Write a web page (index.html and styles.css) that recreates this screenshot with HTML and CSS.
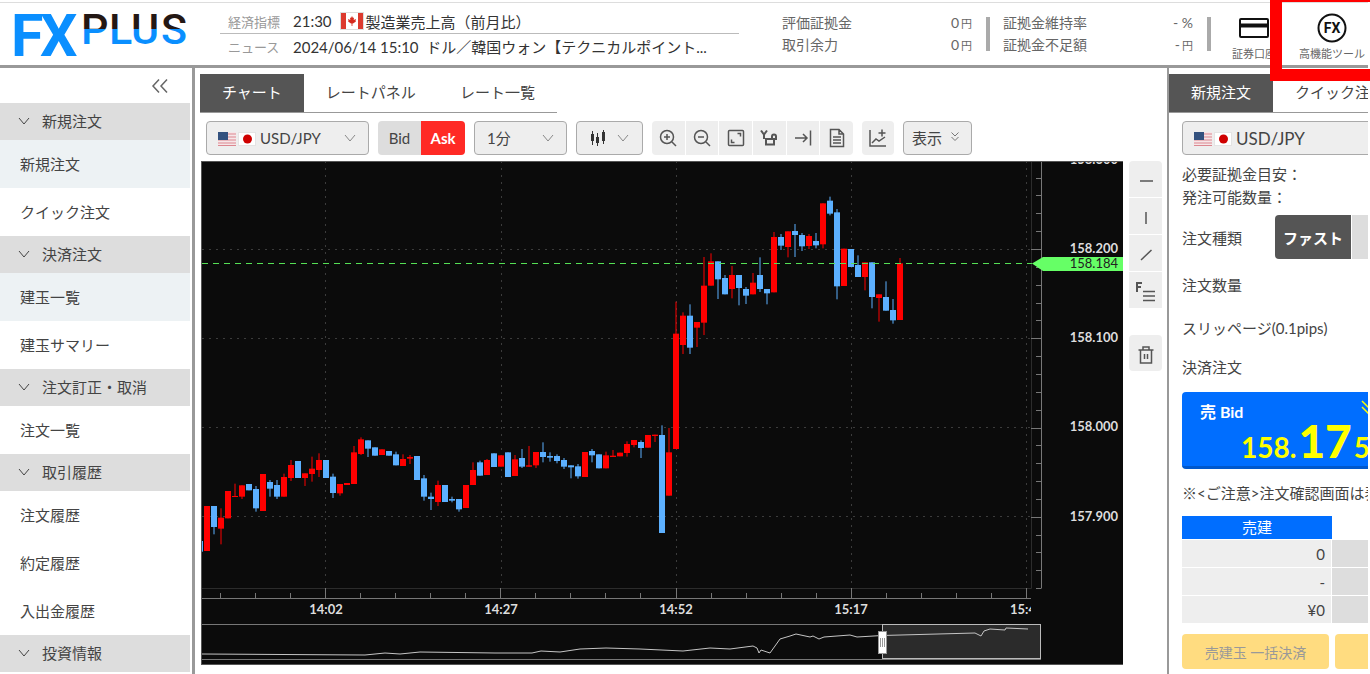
FILE: index.html
```html
<!DOCTYPE html>
<html lang="ja">
<head>
    <meta charset="UTF-8">
    <meta name="viewport" content="width=device-width, initial-scale=1.0">
    <title>FXPLUS</title>
    <link rel="stylesheet" href="styles.css">
</head>
<body>

    <!-- 共通アイコン -->
    <svg class="defs" aria-hidden="true">
        <symbol id="flags" viewBox="0 0 39 16">
            <rect y="1" width="18" height="14" fill="#f6e6e8"/>
            <path d="M0 3h18M0 6h18M0 9h18M0 12h18M0 14.5h18" stroke="#dc8790" stroke-width="1"/>
            <rect y="1" width="10" height="8" fill="#34527f"/>
            <rect x="20.500" y="1.500" width="17" height="13" fill="#fff" stroke="#e4e4e4"/>
            <circle cx="29.500" cy="8" r="4.500" fill="#cf0000"/>
        </symbol>
        <symbol id="chev" viewBox="0 0 12 12">
            <path d="M1 3l5 6 5-6" fill="none" stroke="currentColor"/>
        </symbol>
    </svg>

    <header class="header">
        <a href="#" class="logo" aria-label="FXPLUS">
            <svg width="180" height="50" viewBox="0 0 180 50">
                <defs>
                    <linearGradient id="twoTone" gradientUnits="userSpaceOnUse" x1="0" y1="0" x2="0" y2="50">
                        <stop offset="0.400" stop-color="#231815"/>
                        <stop offset="0.400" stop-color="#0a8fff"/>
                    </linearGradient>
                </defs>
                <text class="logo-fx" x="-3 26" y="47">FX</text>
                <text class="logo-plus" x="67 95 117 147" y="35" fill="url(#twoTone)">PLUS</text>
            </svg>
        </a>
        <dl class="news">
            <div><dt>経済指標</dt><dd>21:30
                <svg class="flag-ca" width="24" height="18" viewBox="0 0 24 18"><rect x=".5" y=".5" width="23" height="17" fill="#fff" stroke="#ddd"/><path d="M1 1h5v16H1zM18 1h5v16h-5z" fill="#dc3a2e"/><path d="M12 4l1 2 1-.5-.3 2.500L16 7l-.5 2 .5.500-3 2h-.6V14h-.8v-2.500H11l-3-2 .5-.5L8 7l2.300 1L10 5.500l1 .5z" fill="#d52b1e"/></svg>製造業売上高（前月比）</dd></div>
            <div><dt>ニュース</dt><dd>2024/06/14 15:10&nbsp; ドル／韓国ウォン【テクニカルポイント...</dd></div>
        </dl>
        <dl class="stats">
            <div><dt>評価証拠金</dt><dd>0<small>円</small></dd></div>
            <div><dt>取引余力</dt><dd>0<small>円</small></dd></div>
        </dl>
        <dl class="stats">
            <div><dt>証拠金維持率</dt><dd>- %</dd></div>
            <div><dt>証拠金不足額</dt><dd>-<small>円</small></dd></div>
        </dl>
        <nav class="tools">
            <a href="#" class="tool tool-account">
                <svg width="30" height="30" viewBox="0 0 30 30"><rect x="1" y="6" width="28" height="18" rx="1" fill="#fff" stroke="#111" stroke-width="2"/><path d="M1 12.500h28" stroke="#111" stroke-width="4"/></svg>
                <span>証券口座</span>
            </a>
            <a href="#" class="tool tool-fx">
                <svg width="30" height="30" viewBox="0 0 30 30"><circle cx="15" cy="15" r="13.500" fill="none" stroke="#111" stroke-width="2"/><text x="15" y="20" text-anchor="middle" class="fx-mark">FX</text></svg>
                <span>高機能ツール</span>
            </a>
        </nav>
        <div class="highlight"></div>
    </header>

    <div class="main">
        <nav class="sidebar">
            <button class="fold" aria-label="メニューを閉じる">
                <svg width="18" height="16" viewBox="0 0 18 16"><path d="M8 1.500L2 8l6 6.500M16 1.500L10 8l6 6.500" fill="none" stroke="#666" stroke-width="1.500"/></svg>
            </button>
            <h2><svg><use href="#chev"/></svg>新規注文</h2>
            <a href="#" class="on">新規注文</a>
            <a href="#">クイック注文</a>
            <h2><svg><use href="#chev"/></svg>決済注文</h2>
            <a href="#" class="on">建玉一覧</a>
            <a href="#">建玉サマリー</a>
            <h2><svg><use href="#chev"/></svg>注文訂正・取消</h2>
            <a href="#">注文一覧</a>
            <h2><svg><use href="#chev"/></svg>取引履歴</h2>
            <a href="#">注文履歴</a>
            <a href="#">約定履歴</a>
            <a href="#">入出金履歴</a>
            <h2><svg><use href="#chev"/></svg>投資情報</h2>
        </nav>

        <section class="center">
            <div class="tabs">
                <button class="active">チャート</button>
                <button>レートパネル</button>
                <button>レート一覧</button>
            </div>

            <div class="toolbar">
                <div class="pair">
                    <svg class="flags"><use href="#flags"/></svg>
                    <select aria-label="通貨ペア"><option>USD/JPY</option></select>
                    <svg class="arrow"><use href="#chev"/></svg>
                </div>
                <div class="bidask">
                    <button>Bid</button><button class="ask">Ask</button>
                </div>
                <div class="span">
                    <select aria-label="足種"><option>1分</option></select>
                    <svg class="arrow"><use href="#chev"/></svg>
                </div>
                <button class="outline kind" aria-label="チャート種類">
                    <svg width="16" height="16" viewBox="0 0 16 16"><path d="M2.500 1v14M7.500 3v13M13.500 0v14" stroke="#333"/><path d="M2.500 4v7M7.500 7v6M13.500 2v9" stroke="#333" stroke-width="3"/></svg>
                    <svg class="chev"><use href="#chev"/></svg>
                </button>
                <div class="icons zoom">
                    <button aria-label="拡大"><svg viewBox="0 0 20 20"><circle cx="9" cy="9" r="6.500"/><path d="M14 14l4 4M6 9h6M9 6v6"/></svg></button>
                    <button aria-label="縮小"><svg viewBox="0 0 20 20"><circle cx="9" cy="9" r="6.500"/><path d="M14 14l4 4M6 9h6"/></svg></button>
                    <button aria-label="全体表示"><svg viewBox="0 0 20 20"><rect x="2.500" y="2.500" width="15" height="15" rx="1"/><path d="M11.500 5.500h3v3M5.500 11.500v3h3"/></svg></button>
                    <button aria-label="Y軸固定"><svg viewBox="0 0 20 20"><path d="M2 2.500l3 4 3-4M5 6.500V11" stroke-width="2"/><rect x="7" y="11" width="8" height="5.500" stroke-width="2"/><path d="M13 11V8.500a2 2 0 0 1 4 0V12" stroke-width="2"/></svg></button>
                    <button aria-label="最新へ"><svg viewBox="0 0 20 20"><path d="M2 10h12M10 6l4 4-4 4M17.500 2.500v15"/></svg></button>
                    <button aria-label="メモ"><svg viewBox="0 0 20 20"><path d="M3.500 1.500h8.500l4.500 4.500v12.500h-13zM12 1.500V6h4.500M6 9h8M6 12h8M6 15h8"/></svg></button>
                </div>
                <div class="icons">
                    <button aria-label="テクニカル追加"><svg viewBox="0 0 20 20"><path d="M2 2v16h16M4 15l4-4 3 2 6-4M14 1.500v7M10.500 5h7"/></svg></button>
                </div>
                <button class="outline">表示
                    <svg class="chev" viewBox="0 0 12 12"><path d="M2.500 1.500L6 5l3.500-3.500M2.500 6L6 9.500 9.500 6" fill="none" stroke="#777"/></svg>
                </button>
            </div>

            <div class="chart-row">
                <div class="chart">
                    <svg id="chart" viewBox="-1 0 922 504" preserveAspectRatio="xMinYMin meet"></svg>
                </div>
                <div class="draw">
                    <button aria-label="水平線"><svg viewBox="0 0 20 20"><path d="M4 10h13"/></svg></button>
                    <button aria-label="垂直線"><svg viewBox="0 0 20 20"><path d="M10 4v12"/></svg></button>
                    <button aria-label="トレンドライン"><svg viewBox="0 0 20 20"><path d="M5 15L15.500 5"/></svg></button>
                    <button aria-label="フィボナッチ"><svg viewBox="0 0 20 20"><path d="M1 10V1h5M1 5h4" stroke-width="2"/><path d="M7 9.500h12M7 14h12M7 18.500h12"/></svg></button>
                    <button class="trash" aria-label="削除"><svg viewBox="0 0 20 20"><path d="M2.500 5h15M7 5V2h6v3M4.500 5v13h11V5M8.500 9v5M11.500 9v5"/></svg></button>
                </div>
            </div>
        </section>

        <aside class="order">
            <div class="tabs">
                <button class="active">新規注文</button>
                <button>クイック注文</button>
            </div>
            <form class="order-form">
                <div class="pair">
                    <svg class="flags"><use href="#flags"/></svg>
                    <select aria-label="注文通貨ペア"><option>USD/JPY</option></select>
                </div>
                <p class="margin">必要証拠金目安：<br>発注可能数量：</p>
                <div class="row type"><span>注文種類</span><button type="button" class="fast">ファスト</button><button type="button" class="next" aria-label="リアルタイム"></button></div>
                <div class="row qty">注文数量</div>
                <div class="row slip">スリッページ(0.1pips)</div>
                <div class="row settle">決済注文</div>
                <button type="button" class="bid">
                    <span class="side">売 Bid</span>
                    <span class="price">158.<b>17</b>5</span>
                    <svg class="down" width="14" height="14" viewBox="0 0 14 14"><path d="M1 1l6 6 6-6M1 7l6 6 6-6" fill="none" stroke="#ff0" stroke-width="1.500"/></svg>
                </button>
                <p class="notice">※&lt;ご注意&gt;注文確認画面は表示されません。</p>
                <table>
                    <tr><th>売建</th><td class="blank"></td></tr>
                    <tr><td>0</td><td class="mid"></td></tr>
                    <tr><td>-</td><td class="mid"></td></tr>
                    <tr><td>¥0</td><td class="mid"></td></tr>
                </table>
                <div class="close-all">
                    <button type="button">売建玉 一括決済</button>
                    <button type="button" aria-label="全決済"></button>
                </div>
            </form>
        </aside>
    </div>

    <script src="chart.js"></script>
</body>
</html>
```

FILE: styles.css
```css
* {
    box-sizing: border-box;
}
body {
    margin: 0;
    padding-right: 2px;
    height: 100vh;
    display: flex;
    flex-direction: column;
    overflow: hidden;
    background: #fff;
    color: #444;
    font-family: Lato, "Noto Sans CJK JP", sans-serif;
    font-size: 15px;
}
button, select {
    font: inherit;
    color: inherit;
    border: none;
    margin: 0;
    padding: 0;
    background: #eee;
    cursor: pointer;
}
a {
    color: inherit;
    text-decoration: none;
}
dl, dd, p, h2 {
    margin: 0;
}
.defs {
    position: absolute;
    width: 0;
    height: 0;
}

/* ヘッダー */
.header {
    position: relative;
    display: flex;
    flex: none;
    height: 68px;
    padding-top: 9px;
    border-bottom: 3px solid #999;
    background: linear-gradient(#ddd, #ddd) 0 2px / 100% 1px no-repeat;
}
.logo {
    flex: none;
    width: 206px;
    padding-left: 14px;
}
.logo svg {
    overflow: visible;
}
.logo-fx {
    font: bold 59px Roboto, sans-serif;
    fill: #0a8fff;
}
.logo-plus {
    font: 500 43px Roboto, sans-serif;
}
.news {
    flex: 0 1 519px;
    margin-left: 14px;
    min-width: 0;
}
.news div {
    display: flex;
    align-items: center;
    height: 24px;
    padding-left: 8px;
    white-space: nowrap;
    overflow: hidden;
}
.news div:first-child {
    height: 25px;
    border-bottom: 1px solid #bbb;
}
.news dt {
    flex: none;
    width: 65px;
    font-size: 13px;
    color: #999;
}
.news dd {
    color: #333;
    display: flex;
    align-items: center;
}
.flag-ca {
    margin: 0 2px 0 8px;
}
.stats {
    flex: none;
    width: 208px;
    height: 34px;
    margin: 8px 0 0 43px;
    border-right: 4px solid #aaa;
    padding-right: 14px;
    font-size: 14px;
    color: #666;
}
.stats + .stats {
    margin-left: 13px;
}
.stats div {
    display: flex;
    justify-content: space-between;
    height: 22px;
    line-height: 22px;
    margin-top: -5px;
}
.stats div + div {
    margin-top: 0;
}
.stats dt {
    white-space: nowrap;
}
.stats small {
    font-size: 11px;
    margin-left: 2px;
}
.tools {
    display: flex;
    flex: none;
    margin-left: 21px;
}
.tool {
    display: flex;
    flex-direction: column;
    align-items: center;
    padding-top: 4px;
    font-size: 11px;
    line-height: 22px;
    white-space: nowrap;
    color: #666;
}
.tool-fx {
    margin-left: 23px;
}
.fx-mark {
    font: bold 14px Roboto, sans-serif;
    fill: #111;
}
.highlight {
    position: absolute;
    top: -10px;
    right: -20px;
    width: 118px;
    height: 91px;
    border: 12px solid #f00;
    pointer-events: none;
    z-index: 2;
}

.main {
    display: flex;
    flex: 1;
    min-height: 0;
}

/* メニュー */
.sidebar {
    flex: none;
    width: 195px;
    padding-right: 2px;
    border-right: 3px solid #999;
    overflow: hidden;
}
.sidebar .fold {
    display: flex;
    align-items: center;
    justify-content: flex-end;
    width: 100%;
    height: 35px;
    padding-right: 21px;
    background: none;
}
.sidebar h2 {
    display: flex;
    align-items: center;
    height: 37px;
    padding: 0 0 2px 18px;
    background: #ddd;
    font-size: 15px;
    font-weight: normal;
}
.sidebar h2 svg {
    width: 12px;
    height: 12px;
    margin-right: 12px;
}
.sidebar a {
    display: block;
    height: 48px;
    padding-left: 20px;
    line-height: 48px;
}
.sidebar a.on {
    background: #edf2f4;
}

/* タブ */
.tabs {
    display: flex;
    width: max-content;
    margin-top: 6px;
    border-bottom: 1px solid #999;
}
.tabs button {
    height: 38px;
    padding: 0 22px 3px;
    background: none;
    white-space: nowrap;
}
.tabs .active {
    background: #555;
    color: #fff;
}

/* チャート */
.center {
    flex: 1;
    min-width: 0;
    padding: 0 5px;
}
.toolbar {
    display: flex;
    gap: 9px;
    height: 34px;
    margin: 8px 0 6px 6px;
}
.pair, .span {
    position: relative;
    flex: none;
}
.pair {
    width: 163px;
}
.span {
    width: 93px;
}
.pair select, .span select, .outline {
    appearance: none;
    width: 100%;
    height: 34px;
    padding-left: 12px;
    border: 1px solid #aaa;
    border-radius: 4px;
    background: #eee;
}
.pair select {
    padding-left: 53px;
}
.flags {
    position: absolute;
    left: 12px;
    top: 10px;
    width: 39px;
    height: 16px;
}
.arrow {
    position: absolute;
    right: 13px;
    top: 11px;
    width: 12px;
    height: 12px;
    color: #888;
    pointer-events: none;
}
.bidask {
    display: flex;
}
.bidask button {
    width: 43px;
    background: #ddd;
    border-radius: 4px 0 0 4px;
}
.bidask .ask {
    width: 44px;
    background: #ff2a25;
    color: #fff;
    font-weight: bold;
    border-radius: 0 4px 4px 0;
}
.outline {
    display: flex;
    align-items: center;
    justify-content: space-between;
    width: 69px;
    padding: 0 10px 2px 8px;
}
.outline.kind {
    width: 67px;
    padding: 0 13px;
}
.chev {
    width: 12px;
    height: 12px;
    color: #888;
}
.icons {
    display: flex;
    gap: 1px;
    width: 32px;
    border-radius: 4px;
    overflow: hidden;
}
.icons.zoom {
    width: 201px;
}
.icons button {
    display: flex;
    flex: 1;
    align-items: center;
    justify-content: center;
}
.icons svg, .draw svg {
    width: 20px;
    height: 20px;
    fill: none;
    stroke: #555;
    stroke-width: 1.500;
}
.chart-row {
    display: flex;
    gap: 6px;
    padding-left: 1px;
}
.chart {
    flex: 1;
    min-width: 0;
    background: #0b0b0b;
}
.chart > svg {
    display: block;
    width: 100%;
}
.chart text {
    font-size: 13px;
    font-weight: bold;
    fill: #ddd;
}
.chart .now {
    font-weight: normal;
    fill: #222;
}
.draw {
    flex: none;
    display: flex;
    flex-direction: column;
    gap: 1px;
    width: 33px;
}
.draw button {
    display: flex;
    align-items: center;
    justify-content: center;
    height: 36px;
    padding-top: 3px;
}
.draw button:first-child {
    border-radius: 4px 4px 0 0;
}
.draw .trash {
    margin-top: 26px;
    border-radius: 4px;
}

/* 注文パネル */
.order {
    flex: 0 0 201px;
    border-left: 2px solid #999;
    overflow: hidden;
}
.order-form {
    width: 380px;
    padding-left: 13px;
}
.order-form .pair {
    width: auto;
    margin-top: 8px;
}
.order-form select {
    font-size: 17px;
}
.margin {
    margin-top: 8px;
    line-height: 23px;
}
.row {
    display: flex;
    align-items: center;
}
.row.type {
    height: 44px;
    margin-top: 6px;
}
.row.type span {
    width: 93px;
}
.fast {
    width: 76px;
    height: 44px;
    border-radius: 4px 0 0 4px;
    background: #555;
    color: #fff;
    font-weight: bold;
}
.next {
    width: 76px;
    height: 44px;
    margin-left: 1px;
    background: #ddd;
}
.row.qty {
    height: 50px;
}
.row.slip {
    height: 36px;
}
.row.settle {
    height: 42px;
}
.bid {
    position: relative;
    display: block;
    width: 367px;
    height: 77px;
    margin-top: 5px;
    padding-top: 8px;
    border-bottom: 3px solid #0058cc;
    border-radius: 4px;
    background: #006eff;
    color: #fff;
    text-align: left;
}
.side {
    display: block;
    margin-bottom: 2px;
    padding-left: 18px;
    font-size: 16px;
    font-weight: bold;
    line-height: 20px;
}
.price {
    display: block;
    padding-left: 59px;
    font-size: 28px;
    font-weight: bold;
    line-height: 34px;
    color: #ff0;
}
.price b {
    font-size: 46px;
    margin: 0 2px;
}
.down {
    position: absolute;
    left: 179px;
    top: 8px;
}
.notice {
    margin: 13px 0 11px;
    line-height: 23px;
    white-space: nowrap;
}
table {
    width: 300px;
    table-layout: fixed;
    border-collapse: separate;
    border-spacing: 0;
}
th {
    height: 23px;
    padding: 0;
    background: #006eff;
    color: #fff;
    font-weight: normal;
    line-height: 23px;
}
td {
    height: 28px;
    padding: 0 6px;
    border-top: 1px solid #fff;
    border-right: 1px solid #fff;
    background: #eee;
    line-height: 20px;
    text-align: right;
}
.mid {
    background: #ddd;
}
.blank {
    height: 23px;
    background: none;
}
.close-all {
    display: flex;
    gap: 6px;
    margin-top: 11px;
}
.close-all button {
    width: 147px;
    height: 35px;
    border-radius: 4px;
    background: #ffdc80;
    color: #999;
    font-size: 14px;
}
```

FILE: chart.js
```js
// ローソク足: [色, 始値側, 終値側, 高値, 安値] 単位は1/3ドット
const early = [
    ["B", 423, 455], ["R", 318, 453], ["B", 318, 381, 318, 403], ["R", 353, 386, 325, 433],
    ["R", 273, 355], ["R", 288, 291, 251, 291], ["R", 256, 290, 256, 297], ["B", 252, 271],
    ["B", 267, 325, 258, 335], ["R", 222, 333], ["B", 246, 266, 240, 290], ["B", 255, 290, 240, 297],
    ["R", 231, 290, 221, 290], ["R", 195, 234, 180, 243], ["B", 183, 234], ["R", 220, 234, 220, 258],
    ["R", 206, 222, 170, 245], ["R", 180, 210, 160, 231], ["B", 180, 234], ["B", 230, 279, 221, 294],
    ["R", 252, 280, 252, 287], ["R", 249, 255], ["R", 157, 252, 138, 252], ["R", 118, 162, 112, 165],
    ["B", 121, 146, 121, 171], ["B", 142, 167], ["R", 148, 165], ["B", 153, 167],
    ["B", 163, 196, 155, 196], ["R", 177, 198, 163, 198], ["R", 171, 176, 165, 192], ["B", 168, 240],
    ["B", 235, 290, 225, 302], ["B", 290, 297, 278, 330], ["R", 255, 306, 242, 318], ["B", 255, 306],
    ["B", 297, 302, 290, 307], ["B", 297, 328, 297, 335], ["R", 255, 324], ["R", 210, 255, 187, 255],
    ["B", 187, 227, 182, 227], ["R", 180, 225, 177, 225], ["B", 160, 201], ["R", 166, 200],
    ["B", 157, 231], ["R", 178, 228, 165, 228], ["B", 174, 200, 147, 204], ["R", 196, 200, 138, 200],
    ["R", 156, 196, 156, 204], ["B", 156, 171, 127, 187], ["B", 168, 173, 157, 185], ["B", 168, 183, 163, 190],
    ["B", 180, 200, 174, 207], ["B", 196, 202, 196, 235], ["B", 199, 229, 192, 236], ["R", 156, 231],
    ["B", 153, 166, 147, 187], ["B", 163, 205], ["R", 166, 205, 155, 205], ["R", 167, 171, 150, 171],
    ["R", 158, 169], ["R", 132, 159, 124, 170], ["R", 120, 135, 120, 142], ["B", 126, 144, 121, 174],
    ["R", 105, 143], ["R", 104, 108, 104, 126], ["B", 105, 399, 76, 399], ["R", 157, 287, 84, 287]
];
const late = [
    ["R", 446, 792, 350, 792], ["R", 392, 480, 382, 507], ["B", 392, 488, 358, 507], ["R", 411, 428, 411, 486],
    ["R", 302, 413, 216, 450], ["R", 229, 302, 205, 302], ["B", 229, 283, 229, 342], ["B", 279, 328, 270, 328],
    ["R", 270, 312, 243, 340], ["B", 270, 309, 270, 361], ["B", 312, 332, 306, 357], ["R", 293, 328, 264, 328],
    ["B", 270, 312, 217, 321], ["B", 312, 325, 312, 358], ["R", 156, 322, 141, 322], ["B", 156, 182, 147, 195],
    ["R", 139, 186, 139, 217], ["B", 138, 150, 117, 216], ["B", 150, 184, 144, 198], ["R", 153, 183, 147, 192],
    ["B", 168, 181, 144, 190], ["R", 55, 178, 55, 190], ["B", 47, 86, 35, 91], ["B", 82, 304, 72, 343],
    ["R", 191, 303], ["B", 192, 246], ["B", 240, 276, 211, 276], ["R", 232, 276, 232, 316],
    ["B", 232, 336, 232, 370], ["R", 328, 339, 328, 410], ["B", 336, 377, 289, 377], ["B", 375, 406, 342, 416],
    ["R", 235, 405, 219, 405]
];
const colors = { R: "#ff0000", B: "#5cb0ff" };

function candles(list, x0, y0) {
    return list.map(([color, top, bottom, high = top, low = bottom], i) => {
        const x = x0 + i * 7;
        const y = v => y0 + v / 3;
        return `<path d="M${x} ${y(high)}V${y(low)}" stroke="${colors[color]}"/>` +
            `<rect x="${x - 3}" y="${y(top)}" width="6" height="${(bottom - top) / 3}" fill="${colors[color]}"/>`;
    }).join("");
}

function line(d, stroke, extra = "") {
    return `<path d="${d}" fill="none" stroke="${stroke}" ${extra}/>`;
}

let out = "";

// グリッド
for (const y of [88.5, 177.5, 266.5, 355.5]) out += line(`M0 ${y}H829`, "#3c3c3c", 'stroke-dasharray="2 5"');
for (const x of [123.5, 299.5, 474.5, 649.5, 824.5]) out += line(`M${x} 0V427`, "#3c3c3c", 'stroke-dasharray="2 5"');

out += candles(early, -2, 239) + candles(late, 474, 24);

// 軸
out += line("M0 427.5H829.5V0", "#2c2c2c");
out += line("M0 437.5H829M839.5 0V427.5", "#777");
for (let i = -4; i < 20; i++) {
    const y = Math.round(88 + i * 17.85) + 0.5;
    out += line(`M${i % 5 ? 834 : 829} ${y}H839`, "#777");
}
for (let i = -3; i <= 20; i++) {
    out += line(`M${Math.round(123 + i * 35.05) + 0.5} ${i % 5 ? 432 : 427}V437`, "#777");
}
[["158.300", 3], ["158.200", 92], ["158.100", 181], ["158.000", 270], ["157.900", 360]].forEach(([t, y]) => {
    out += `<text x="916" y="${y}" text-anchor="end">${t}</text>`;
});
[["14:02", 124], ["14:27", 299], ["14:52", 474], ["15:17", 649]].forEach(([t, x]) => {
    out += `<text x="${x}" y="453" text-anchor="middle">${t}</text>`;
});
out += '<svg x="800" y="438" width="29" height="24"><text x="8" y="15">15:42</text></svg>';

// 現在値
out += line("M0 102.5H830", "#55e055", 'stroke-dasharray="6 5"');
out += '<path d="M830 102.500L841 96H922V110H841Z" fill="#66ff66"/>';
out += '<text class="now" x="916" y="107" text-anchor="end">158.184</text>';

// 全体表示
out += line("M0 463.500H839M0 498.500H839", "#777");
out += '<rect x="680.500" y="463.500" width="158" height="34" fill="#2b2b2b" stroke="#bbb"/>';
out += line("M0 493L163 494 183 492 198 493 218 491 293 492 330 492 339 490 358 491 378 488 404 487 438 488 481 490 508 487 528 488 551 485 555 487 557 492 559 489 568 492 578 478 588 475 594 473 608 476 611 475 617 478 622 476 648 474 655 476 680 474.500 773 472 779 475 782 470 788 468 803 469 804 467 826 468", "#c4c4c4");
out += '<rect x="676.500" y="470.500" width="8" height="22" fill="#fff" stroke="#999"/>';
out += line("M678.500 477V486M680.500 477V486M682.500 477V486", "#999");
out += line("M-1 .5H921M-.5 0V504M-1 503.500H921", "#555");

document.getElementById("chart").innerHTML = out;
```
